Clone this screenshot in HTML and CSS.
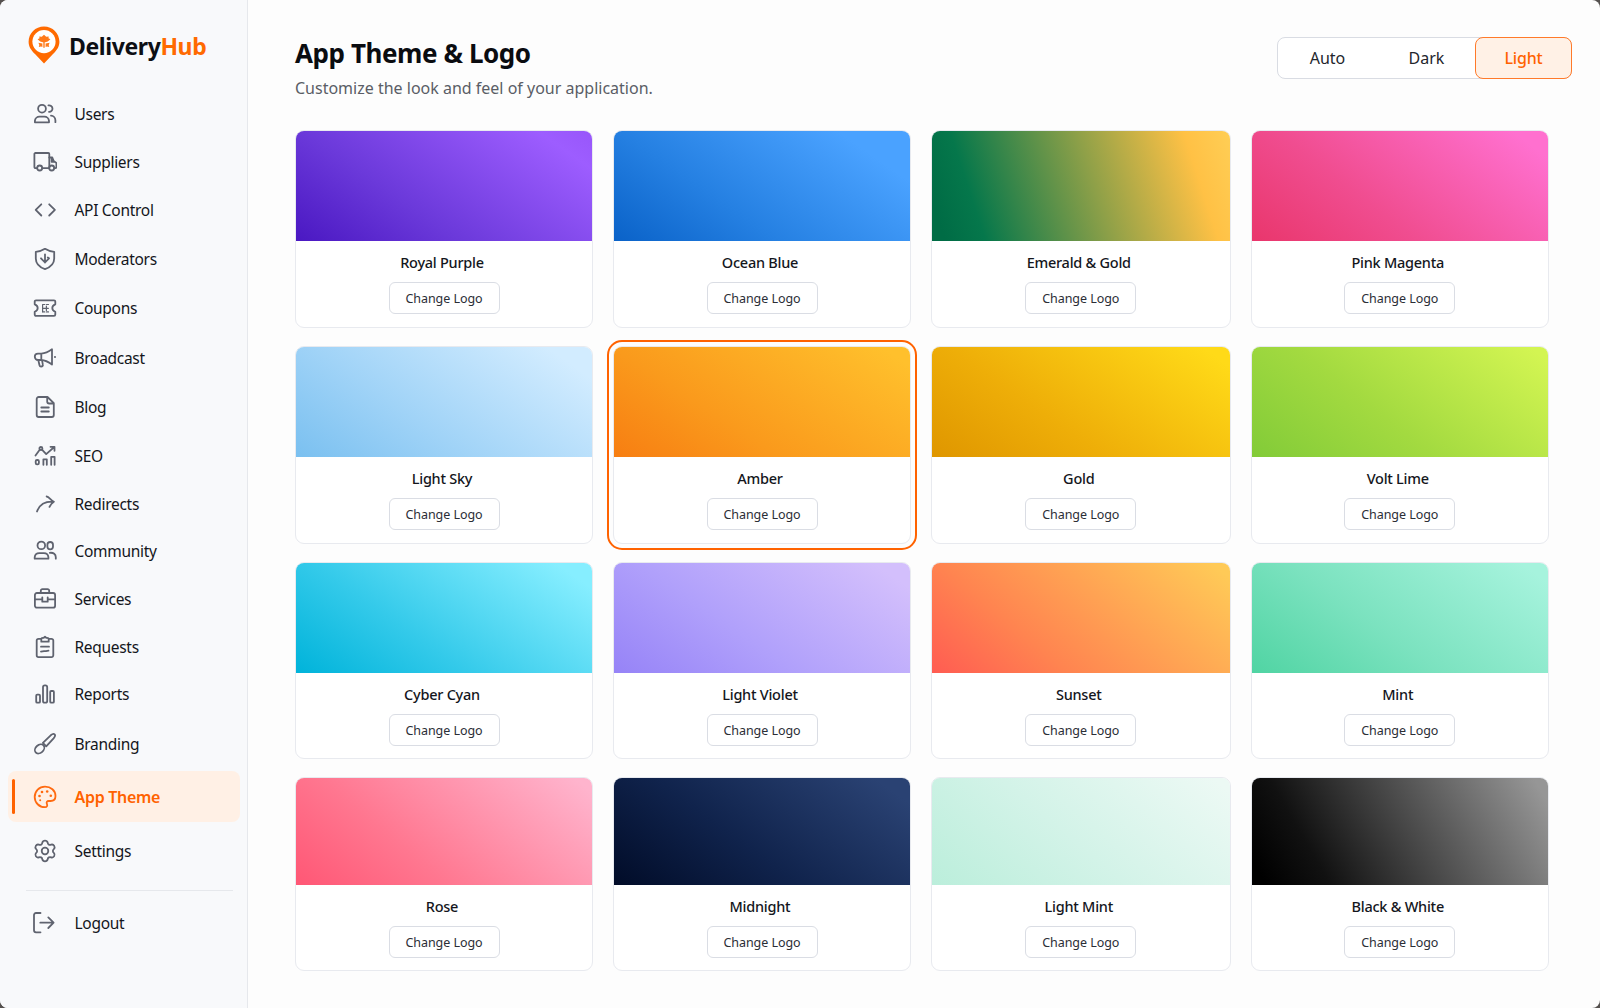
FILE: index.html
```
<!DOCTYPE html>
<html lang="en">
<head>
    <meta charset="UTF-8">
    <meta name="viewport" content="width=device-width, initial-scale=1.0">
    <title>DeliveryHub | App Theme &amp; Logo</title>
    <link rel="stylesheet" href="styles.css">
</head>
<body>
    <div class="app">
        <aside class="sidebar">
            <div class="brand">
                <svg class="brand-pin" viewBox="0 0 32 38">
                    <path fill="#ff6a00" d="M16 .6C7.4.6.6 7.400.6 15.800c0 5.200 2.700 8.500 6.400 12.300L16 37.600l9-9.500c3.700-3.800 6.400-7.100 6.400-12.300C31.400 7.400 24.600.6 16 .6z"/>
                    <circle cx="16" cy="15.600" r="11.600" fill="#fff"/>
                    <path fill="#ff7a1a" d="M16 8.800l2.200 2 2.500-.3-.2 1.800 1.900.9-2.600 2.300-2.600.7h-2.400l-2.600-.7-2.600-2.300 1.900-.9-.2-1.800 2.500.3z"/>
                    <path fill="#ff7a1a" d="M15.300 16h1.400v5.800h-1.400zM10.400 16.800l4 .6v3.700l-1.400-.6-2.200.4.500-1.900zM21.600 16.800l-4 .6v3.700l1.400-.6 2.200.4-.5-1.900z"/>
                </svg>
                <span class="brand-name">Delivery<span>Hub</span></span>
            </div>

            <nav class="nav">
                <a class="nav-item">
                    <svg viewBox="0 0 24 24"><circle cx="9" cy="6.700" r="3.900"/><path d="M1.900 20.300v-1.500a4.600 4.600 0 0 1 4.600-4.200h4.900a4.600 4.600 0 0 1 4.600 4.200v1.500z"/><path d="M15.400 3.400a3.300 3.300 0 1 1 .6 6.500M18 13.600a4.700 4.700 0 0 1 4.400 4.600v2"/></svg>
                    Users
                </a>
                <a class="nav-item">
                    <svg viewBox="0 0 24 24"><path d="M4 18.100H2.400a1 1 0 0 1-1-1V4a1 1 0 0 1 1-1h12.900a1 1 0 0 1 1 1v14.100H9.300"/><path d="M16.300 7.500h3l1.400 3.600 2.700 1.800v4.200a1 1 0 0 1-1 1h-1M18.600 7.800v4h2.500"/><circle cx="6.700" cy="18" r="2.500"/><circle cx="18.700" cy="18" r="2.500"/></svg>
                    Suppliers
                </a>
                <a class="nav-item">
                    <svg viewBox="0 0 24 24"><path d="M8.300 6.300 2.700 11.900l5.600 5.600M16.200 6.300l5.700 5.600-5.700 5.600"/></svg>
                    API Control
                </a>
                <a class="nav-item">
                    <svg viewBox="0 0 24 24"><path d="M12 1.800c2.700 1.700 5.700 2.800 9.200 3v6.600c0 5-3.500 8.600-9.200 10.700-5.700-2.100-9.200-5.700-9.200-10.700V4.800c3.500-.2 6.500-1.300 9.200-3z"/><path d="M12 7.300v8.200M8 11.300l4 4.200 4-4.200M14.800 10.500l1.200.8"/></svg>
                    Moderators
                </a>
                <a class="nav-item">
                    <svg viewBox="0 0 24 24"><path d="M3 4.300h18a1.300 1.300 0 0 1 1.300 1.300v2.700c-4 1.500-4 6.100 0 7.600v2.700a1.300 1.300 0 0 1-1.300 1.300H3a1.300 1.300 0 0 1-1.300-1.300v-2.700c4-1.500 4-6.100 0-7.600V5.600A1.300 1.300 0 0 1 3 4.300z"/><path class="thin" d="M9.600 8.500v7.600M9.600 8.500h2.200M9.600 12.300h5.800M9.600 15.900h2.200M13.500 8.500h2M13.500 15.900h2M13.400 10v4.500"/></svg>
                    Coupons
                </a>
                <a class="nav-item">
                    <svg viewBox="0 0 24 24"><path d="M8.300 7.600c4-.2 7.300-1.800 10.700-4.300v15.200c-3.400-2.500-6.700-4.300-10.700-4.500H5a3.200 3.200 0 0 1 0-6.400zM8.300 7.600V14M5.300 14l1.200 5.300a1.600 1.600 0 0 0 1.600 1.200c1.500 0 2-1 1.700-2.100l-.8-4.300M21.900 11h.2"/></svg>
                    Broadcast
                </a>
                <a class="nav-item">
                    <svg viewBox="0 0 24 24"><path d="M14.500 2H5.700a2 2 0 0 0-2 2v16a2 2 0 0 0 2 2h13.100a2 2 0 0 0 2-2V8.200zM14.200 2.300v4.200a2 2 0 0 0 2 2h4.300M8.300 12.500h7.500M8.300 16.500h7.500"/></svg>
                    Blog
                </a>
                <a class="nav-item">
                    <svg viewBox="0 0 24 24"><path d="M2.500 11.500l4.200-5.800M9.200 5.800l4 4.300L21 3.300M17.500 2.800h4v4"/><circle cx="7.900" cy="4.500" r="1.500"/><rect x="2.700" y="16" width="3.200" height="4.300" rx="1.300"/><path d="M10.400 20.800v-5.500h3.400v5.500M18.200 20.800v-8h3.400v8"/></svg>
                    SEO
                </a>
                <a class="nav-item">
                    <svg viewBox="0 0 24 24"><path d="M4 19.500C6.400 13 11.300 9.600 19 9.700M13.600 4.500c2.500.2 3.900 3.500 7.300 5.200-2.500 1.400-3.500 3-4.400 5.200"/></svg>
                    Redirects
                </a>
                <a class="nav-item">
                    <svg viewBox="0 0 24 24"><circle cx="8.300" cy="6.400" r="3.800"/><path d="M1.700 19.700v-1.500a4.600 4.600 0 0 1 4.600-4.100h4.500a4.600 4.600 0 0 1 4.600 4.100v1.500z"/><rect x="14.400" y="3" width="5.600" height="7.400" rx="2.800"/><path d="M16.800 13.800c3.800-.5 6 1.700 6 4.400v1.500"/></svg>
                    Community
                </a>
                <a class="nav-item">
                    <svg viewBox="0 0 24 24"><rect x="1.900" y="6" width="20.200" height="14.700" rx="2"/><path d="M7.800 5.900V3.800A1.600 1.600 0 0 1 9.400 2.200h5.200a1.600 1.600 0 0 1 1.600 1.600v2.100M2.200 12.300h6.400M15.400 12.300h6.400M9.300 10.300v4.400h5.400v-4.400"/></svg>
                    Services
                </a>
                <a class="nav-item">
                    <svg viewBox="0 0 24 24"><path d="M7.800 3.800H5.500a1.800 1.800 0 0 0-1.800 1.800v14.700a1.800 1.800 0 0 0 1.800 1.800h13a1.800 1.800 0 0 0 1.800-1.800V5.600a1.800 1.800 0 0 0-1.800-1.800h-2.300"/><path d="M9.800 2.800h1l1.200-1 1.200 1h1a1.500 1.500 0 0 1 1.500 1.500v2.400H8.300V4.300a1.500 1.500 0 0 1 1.500-1.500zM8 11.700h8M8 16.600l3-.4 2-.1 2.500-.4"/></svg>
                    Requests
                </a>
                <a class="nav-item">
                    <svg viewBox="0 0 24 24"><rect x="3.200" y="12.700" width="3.800" height="8" rx="1"/><rect x="10" y="3.400" width="4.200" height="17.300" rx="1.800"/><rect x="17.200" y="9" width="3.700" height="11.700" rx="1"/></svg>
                    Reports
                </a>
                <a class="nav-item">
                    <svg viewBox="0 0 24 24"><path d="M9.900 10.800l7.800-7.500c1.600-1.400 3.300-1.600 3.900-1 .7.700.4 2.400-1 4l-7.400 8z"/><ellipse cx="6.600" cy="16.900" rx="5.300" ry="3.900" transform="rotate(-42 6.600 16.900)"/></svg>
                    Branding
                </a>
                <a class="nav-item active">
                    <svg viewBox="0 0 24 24"><path d="M12 22.200C6.200 22.200 1.700 17.700 1.700 12S6.200 1.600 12 1.600 22.500 5.600 22.500 11c0 3.200-2.200 5-5 5h-1.700c-2 0-2.600 1.400-1.900 2.900.8 1.700.2 3.300-1.900 3.300z"/><g class="dots"><circle cx="6.500" cy="11" r="1.300"/><circle cx="9" cy="7" r="1.300"/><circle cx="14.200" cy="6.500" r="1.300"/><circle cx="17.800" cy="10.700" r="1.300"/><circle cx="7.200" cy="15.300" r="1"/></g></svg>
                    App Theme
                </a>
                <a class="nav-item">
                    <svg viewBox="0 0 24 24"><path d="M9.300 3.700a2.800 2.800 0 0 1 5.400 0 2.340 2.340 0 0 0 3.400 1.950 2.700 2.700 0 0 1 2.700 4.500 2.340 2.340 0 0 0 0 3.700 2.700 2.700 0 0 1-2.700 4.500 2.340 2.340 0 0 0-3.400 1.950 2.800 2.800 0 0 1-5.400 0 2.340 2.340 0 0 0-3.400-1.950 2.700 2.700 0 0 1-2.700-4.500 2.340 2.340 0 0 0 0-3.700 2.700 2.700 0 0 1 2.700-4.500A2.340 2.340 0 0 0 9.300 3.700z"/><circle cx="12" cy="12" r="3.300"/></svg>
                    Settings
                </a>
            </nav>

            <div class="nav-footer">
                <a class="nav-item">
                    <svg viewBox="0 0 24 24"><path d="M7.500 2H3a2 2 0 0 0-2 2v15.300a2 2 0 0 0 2 2h4.500M7.300 11.700h13M15.300 6.400l5.300 5.300-5.300 5.300"/></svg>
                    Logout
                </a>
            </div>
        </aside>

        <main class="content">
            <header class="page-header">
                <div>
                    <h1>App Theme &amp; Logo</h1>
                    <p>Customize the look and feel of your application.</p>
                </div>
                <div class="mode-switch">
                    <button type="button">Auto</button>
                    <button type="button">Dark</button>
                    <button type="button" class="active">Light</button>
                </div>
            </header>

            <section class="theme-grid">
                <div class="theme-card">
                    <div class="swatch royal-purple"></div>
                    <h3>Royal Purple</h3>
                    <button type="button" class="change-btn">Change Logo</button>
                </div>
                <div class="theme-card">
                    <div class="swatch ocean-blue"></div>
                    <h3>Ocean Blue</h3>
                    <button type="button" class="change-btn">Change Logo</button>
                </div>
                <div class="theme-card">
                    <div class="swatch emerald-gold"></div>
                    <h3>Emerald &amp; Gold</h3>
                    <button type="button" class="change-btn">Change Logo</button>
                </div>
                <div class="theme-card">
                    <div class="swatch pink-magenta"></div>
                    <h3>Pink Magenta</h3>
                    <button type="button" class="change-btn">Change Logo</button>
                </div>

                <div class="theme-card">
                    <div class="swatch light-sky"></div>
                    <h3>Light Sky</h3>
                    <button type="button" class="change-btn">Change Logo</button>
                </div>
                <div class="theme-card selected">
                    <div class="swatch amber"></div>
                    <h3>Amber</h3>
                    <button type="button" class="change-btn">Change Logo</button>
                </div>
                <div class="theme-card">
                    <div class="swatch gold"></div>
                    <h3>Gold</h3>
                    <button type="button" class="change-btn">Change Logo</button>
                </div>
                <div class="theme-card">
                    <div class="swatch volt-lime"></div>
                    <h3>Volt Lime</h3>
                    <button type="button" class="change-btn">Change Logo</button>
                </div>

                <div class="theme-card">
                    <div class="swatch cyber-cyan"></div>
                    <h3>Cyber Cyan</h3>
                    <button type="button" class="change-btn">Change Logo</button>
                </div>
                <div class="theme-card">
                    <div class="swatch light-violet"></div>
                    <h3>Light Violet</h3>
                    <button type="button" class="change-btn">Change Logo</button>
                </div>
                <div class="theme-card">
                    <div class="swatch sunset"></div>
                    <h3>Sunset</h3>
                    <button type="button" class="change-btn">Change Logo</button>
                </div>
                <div class="theme-card">
                    <div class="swatch mint"></div>
                    <h3>Mint</h3>
                    <button type="button" class="change-btn">Change Logo</button>
                </div>

                <div class="theme-card short">
                    <div class="swatch rose"></div>
                    <h3>Rose</h3>
                    <button type="button" class="change-btn">Change Logo</button>
                </div>
                <div class="theme-card short">
                    <div class="swatch midnight"></div>
                    <h3>Midnight</h3>
                    <button type="button" class="change-btn">Change Logo</button>
                </div>
                <div class="theme-card short">
                    <div class="swatch light-mint"></div>
                    <h3>Light Mint</h3>
                    <button type="button" class="change-btn">Change Logo</button>
                </div>
                <div class="theme-card short">
                    <div class="swatch black-white"></div>
                    <h3>Black &amp; White</h3>
                    <button type="button" class="change-btn">Change Logo</button>
                </div>
            </section>
        </main>
    </div>
</body>
</html>
```
FILE: styles.css
```
* {
    margin: 0;
    padding: 0;
    box-sizing: border-box;
    font-family: 'Segoe UI', 'Noto Sans', 'Open Sans', sans-serif;
}

body {
    background: #55514f;
    overflow: hidden;
}

.app {
    display: flex;
    height: 100vh;
    background: #fdfdfd;
    border-radius: 8px;
    overflow: hidden;
}

/* Sidebar */
.sidebar {
    width: 248px;
    flex-shrink: 0;
    background: #f8f9fb;
    border-right: 1px solid #e6e8ec;
}

.brand {
    display: flex;
    align-items: center;
    gap: 9px;
    height: 90px;
    padding: 0 0 0 28px;
}

.brand-pin {
    width: 32px;
    height: 38px;
}

.brand-name {
    font-size: 23px;
    font-weight: 700;
    letter-spacing: -0.4px;
    line-height: 30px;
    padding-top: 1px;
    color: #0d0f14;
}

.brand-name span {
    color: #ff6a00;
}

.nav {
    display: grid;
    grid-template-rows: 48px 48px 49px 48px 50px 50px 49px 48px 48px 47px 48px 48px 47px 53px 51px 58px;
    padding: 0 7px 0 8px;
}

.nav-item {
    position: relative;
    display: flex;
    align-items: center;
    gap: 17.5px;
    padding-left: 25px;
    padding-bottom: 1px;
    font-size: 15.5px;
    letter-spacing: -0.3px;
    color: #14161c;
    cursor: pointer;
}

.nav-item svg {
    width: 24px;
    height: 24px;
    fill: none;
    stroke: #5f636f;
    stroke-width: 1.8;
    stroke-linecap: round;
    stroke-linejoin: round;
}

.nav-item .thin {
    stroke-width: 1.2;
}

.nav-item.active {
    padding-bottom: 0;
    background: #fff0e5;
    border-radius: 8px;
    color: #ff6200;
    font-size: 16px;
    font-weight: 600;
}

.nav-item.active svg {
    stroke: #ff6a10;
}

.nav-item.active::before {
    content: '';
    position: absolute;
    left: 4px;
    top: 8px;
    bottom: 8px;
    width: 3px;
    border-radius: 2px;
    background: #ff6200;
}

.nav-item .dots {
    fill: #ff6a10;
    stroke: none;
}

.nav-footer {
    margin: 10px 14px 0 26px;
    padding-top: 13px;
    border-top: 1px solid #e6e8ec;
}

.nav-footer .nav-item {
    height: 38px;
    padding-left: 7px;
}

/* Content */
.content {
    flex: 1;
    padding: 37px 28px 0 47px;
}

.page-header {
    display: flex;
    justify-content: space-between;
    align-items: flex-start;
    height: 93px;
}

.page-header h1 {
    margin-top: -1px;
    font-size: 26px;
    font-weight: 700;
    letter-spacing: -0.42px;
    line-height: 34px;
    color: #0a0c10;
}

.page-header p {
    margin-top: 6px;
    font-size: 16px;
    line-height: 24px;
    color: #5a5d66;
}

.mode-switch {
    display: flex;
    width: 295px;
    height: 42px;
    border: 1px solid #d9dce3;
    border-radius: 8px;
    background: #fff;
}

.mode-switch button {
    flex: 1;
    margin: -1px;
    border: 1px solid transparent;
    border-radius: 8px;
    background: none;
    font-size: 16px;
    color: #23262d;
    cursor: pointer;
}

.mode-switch button.active {
    flex: 0 0 97px;
    background: #fff1e6;
    border-color: #ff7a2a;
    color: #ff6200;
    font-weight: 500;
    letter-spacing: -0.2px;
}

.theme-grid {
    display: grid;
    grid-template-columns: 298px 298px 299.5px 298.5px;
    grid-template-rows: 198px 198px 197px 194px;
    column-gap: 20px;
    row-gap: 18px;
}

.theme-card {
    display: flex;
    flex-direction: column;
    align-items: center;
    background: #fff;
    border: 1px solid #e8eaef;
    border-radius: 9px;
}

.theme-card.selected {
    outline: 2px solid #ff6200;
    outline-offset: 4px;
}

.swatch {
    align-self: stretch;
    height: 110px;
    border-radius: 8px 8px 0 0;
}

.theme-card.short .swatch {
    height: 107px;
}

.theme-card h3 {
    margin: 10px 4px 9px 0;
    font-size: 14.5px;
    font-weight: 500;
    letter-spacing: -0.25px;
    line-height: 22px;
    color: #14161c;
}

.change-btn {
    width: 111px;
    height: 32px;
    border: 1px solid #dadde4;
    border-radius: 6px;
    background: #fff;
    font-size: 12.5px;
    letter-spacing: -0.05px;
    color: #2b2e36;
    cursor: pointer;
}

/* Theme gradients */
.royal-purple { background: linear-gradient(35deg, #4a18c2, #6b39da 36%, #9d5dff 88%, #9856fa); }
.ocean-blue { background: linear-gradient(35deg, #0a62c8, #2580e2 36%, #4aa2ff 84%); }
.emerald-gold { background: linear-gradient(72deg, #006c45 4%, #05774b 16%, #8ea048 54%, #ffc145 86%, #ffce55); }
.pink-magenta { background: linear-gradient(38deg, #e9366c, #f04d90 38%, #ff70cf 92%); }
.light-sky { background: linear-gradient(35deg, #7ac0f0, #a0d3f7 38%, #d2ecff 90%); }
.amber { background: linear-gradient(33deg, #f77e12, #fa9a1c 36%, #ffc02c 94%); }
.gold { background: linear-gradient(35deg, #df9600, #eeae08 38%, #ffda18 94%); }
.volt-lime { background: linear-gradient(38deg, #82cb38, #a3da40 42%, #d3f552 96%); }
.cyber-cyan { background: linear-gradient(35deg, #00b3da, #34caea 38%, #86eeff 92%); }
.light-violet { background: linear-gradient(35deg, #9683f7, #b0a0fb 40%, #d3bffc 92%); }
.sunset { background: linear-gradient(40deg, #ff5c52, #ff8450 32%, #ffca57 96%); }
.mint { background: linear-gradient(36deg, #50d4a3, #7be2bf 42%, #a6f3dd 94%); }
.rose { background: linear-gradient(40deg, #ff5775, #ff7790 36%, #ffb4cd 96%); }
.midnight { background: linear-gradient(36deg, #010c28, #10234c 42%, #2a4273 92%); }
.light-mint { background: linear-gradient(40deg, #bbeedb, #d3f3e8 46%, #ecf9f4 96%); }
.black-white { background: linear-gradient(60deg, #000 4%, #111 22%, #969696 96%); }
```
